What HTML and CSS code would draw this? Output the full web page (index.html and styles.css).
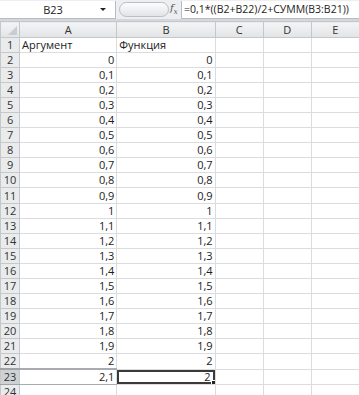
FILE: index.html
```html
<!DOCTYPE html>
<html lang="ru">
<head>
    <meta charset="UTF-8">
    <meta name="viewport" content="width=device-width, initial-scale=1.0">
    <title>Лист1</title>
    <link rel="stylesheet" href="styles.css">
</head>
<body>
<div class="formula-bar">
    <div class="name-box">
        <span class="name-box__text">B23</span>
        <span class="name-box__arrow"></span>
    </div>
    <div class="fx-box">
        <span class="fx-pill"></span>
        <span class="fx-label">f<sub>x</sub></span>
    </div>
    <div class="formula-input">=0,1*((B2+B22)/2+СУММ(B3:B21))</div>
</div>

<table class="sheet">
    <colgroup>
        <col class="col-head">
        <col class="col-a">
        <col class="col-b">
        <col class="col-s">
        <col class="col-s">
        <col class="col-s">
    </colgroup>
    <thead>
        <tr>
            <th class="corner"><span class="corner__tri"></span></th>
            <th>A</th><th>B</th><th>C</th><th>D</th><th>E</th>
        </tr>
    </thead>
    <tbody id="rows">
        <tr><th>1</th><td class="txt">Аргумент</td><td class="txt">Функция</td><td></td><td></td><td></td></tr>
    </tbody>
</table>

<script>
// строки 2..23: аргумент от 0 до 2,1 с шагом 0,1
const rowsNode = document.getElementById('rows')
let html = ''

for (let i = 0; i <= 21; i++) {
  const n = i + 2
  const value = (i / 10).toString().replace('.', ',')
  const func = n === 23 ? '2' : value
  const rowClass = n === 23 ? ' class="active"' : (n === 11 ? ' class="tall"' : '')
  const cellB = n === 23
    ? `<td class="selected">${func}<span class="fill-handle"></span></td>`
    : `<td>${func}</td>`
  html += `<tr${rowClass}><th>${n}</th><td>${value}</td>${cellB}<td></td><td></td><td></td></tr>`
}
html += '<tr><th>24</th><td></td><td></td><td></td><td></td><td></td></tr>'

rowsNode.insertAdjacentHTML('beforeend', html)
</script>
</body>
</html>
```

FILE: styles.css
```css
body {
  margin: 0;
  width: 359px;
  height: 395px;
  overflow: hidden;
  background: #fff;
  font-family: "Open Sans", "Noto Sans", sans-serif;
  font-size: 11px;
  color: #1c1c1c;
}

.formula-bar {
  display: flex;
  height: 19px;
  background: #eceef0;
  border-bottom: 2px solid #d4d7db;
}

.name-box {
  display: flex;
  align-items: center;
  width: 116px;
  margin-top: 1px;
  background: #fff;
  border-right: 1px solid #b7bcc2;
  border-bottom: 1px solid #b7bcc2;
  box-sizing: border-box;
}

.name-box__text {
  flex: 1;
  text-align: center;
  padding-left: 6px;
}

.name-box__arrow {
  width: 0;
  height: 0;
  margin-right: 9px;
  border-left: 3px solid transparent;
  border-right: 3px solid transparent;
  border-top: 3px solid #222;
}

.fx-box {
  position: relative;
  display: flex;
  align-items: center;
  width: 62px;
  padding-left: 3px;
}

.fx-pill {
  width: 50px;
  height: 15px;
  border: 1px solid #b9bec4;
  border-radius: 8px;
  background: linear-gradient(#fdfdfd, #e1e4e7);
  box-sizing: border-box;
}

.fx-label {
  position: absolute;
  left: 54px;
  top: 2px;
  font-family: "DejaVu Serif", serif;
  font-style: italic;
  font-size: 10px;
  color: #555;
}

.fx-label sub {
  font-size: 7px;
}

.formula-input {
  flex: 1;
  margin-top: 1px;
  padding-left: 2px;
  font-size: 10.5px;
  line-height: 17px;
  background: #fff;
  border-left: 1px solid #b7bcc2;
  border-bottom: 1px solid #b7bcc2;
  white-space: nowrap;
}

.sheet {
  border-collapse: collapse;
  table-layout: fixed;
  width: 360px;
}

.col-head { width: 19px; }
.col-a { width: 97px; }
.col-b { width: 98px; }
.col-s { width: 48px; }

.sheet th,
.sheet td {
  height: 14px;
  padding: 0 2px;
  line-height: 14px;
  border: 1px solid #dadcdd;
  white-space: nowrap;
  overflow: hidden;
}

.sheet tr.tall th,
.sheet tr.tall td {
  height: 15px;
}

.sheet thead th {
  height: 15px;
  font-weight: normal;
  color: #333;
  background: linear-gradient(#f3f4f5, #e2e4e6);
  border-color: #c5c8cb;
  text-align: center;
}

.sheet tbody th {
  font-weight: normal;
  color: #333;
  background: #e9ebed;
  border-color: #c5c8cb;
  text-align: center;
  padding: 0;
}

.sheet td {
  text-align: right;
}

.sheet td.txt {
  text-align: left;
}

.corner {
  position: relative;
}

.corner__tri {
  position: absolute;
  right: 2px;
  bottom: 2px;
  width: 0;
  height: 0;
  border-left: 9px solid transparent;
  border-bottom: 9px solid #c9ccd0;
}

.sheet tr.active th {
  background: #cfd2d5;
  border-top: 2px solid #9ea3a8;
  border-bottom: 1px solid #9ea3a8;
}

.sheet tr.active td:nth-child(2) {
  border-top: 2px solid #a8acb0;
  border-bottom: 1px solid #a8acb0;
}

.sheet td.selected {
  position: relative;
  padding-right: 4px;
  box-shadow: inset 0 0 0 2px #3a3a3a;
}

.fill-handle {
  position: absolute;
  right: -1px;
  bottom: -1px;
  width: 5px;
  height: 5px;
  background: #222;
  border: 1px solid #fff;
  box-sizing: border-box;
}
```
